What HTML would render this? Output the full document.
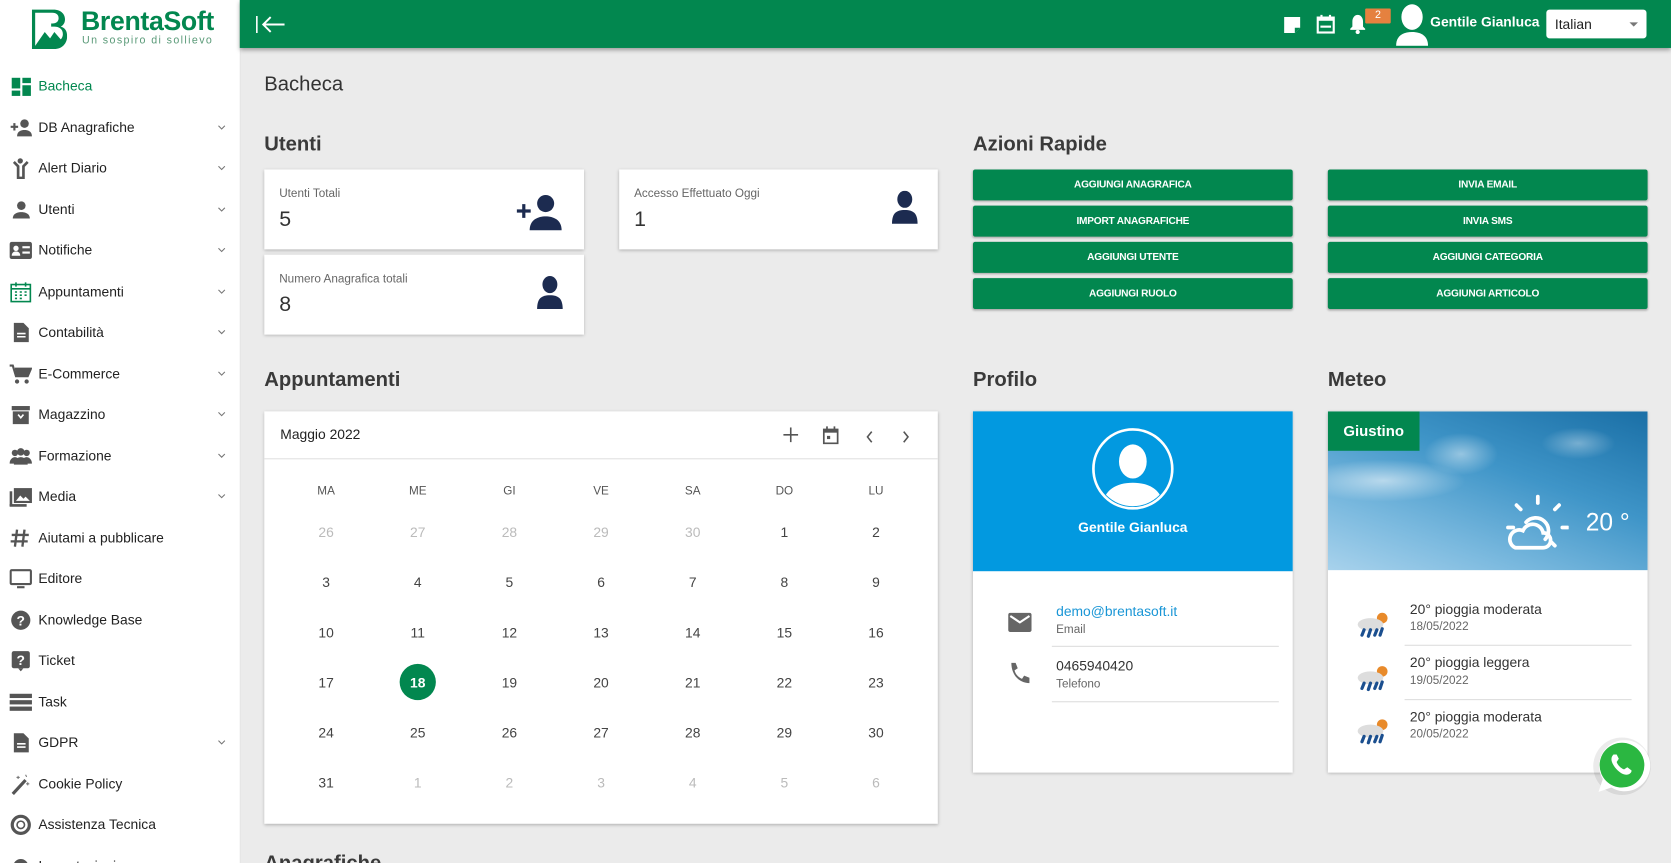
<!DOCTYPE html>
<html><head><meta charset="utf-8">
<style>
html,body{margin:0;padding:0;width:1671px;height:863px;overflow:hidden;background:#ebebeb}
#w{position:absolute;left:0;top:0;width:1568px;height:810px;overflow:hidden;transform:scale(1.0657);transform-origin:0 0;font-family:"Liberation Sans",Arial,sans-serif;color:#333;background:#ebebeb}
.a{position:absolute}
#side{left:0;top:0;width:225px;height:810px;background:#fff;border-right:1px solid #e2e2e2}
.nav{position:absolute;left:0;width:225px;height:30px;font-size:13px;color:#222}
.nav .ic{position:absolute;left:9px;top:5px;width:21px;height:20px}
.nav .t{position:absolute;left:36px;top:7px}
.nav .ch{position:absolute;left:203px;top:10px;width:10px;height:10px}
#hdr{left:225px;top:0;width:1343px;height:45px;background:#02874f;box-shadow:0 2px 4px rgba(0,0,0,.35)}
.h2{position:absolute;font-size:19px;font-weight:bold;color:#3a3a3a}
.card{position:absolute;background:#fff;box-shadow:0 1px 3px rgba(0,0,0,.25)}
.lbl{position:absolute;font-size:11px;color:#666}
.num{position:absolute;font-size:20px;color:#333}
.btn{position:absolute;width:300px;height:29px;background:#02874f;color:#fff;font-size:9.5px;font-weight:bold;text-align:center;line-height:29px;border-radius:2px;box-shadow:0 1px 2px rgba(0,0,0,.3);letter-spacing:-.2px}
.dh{position:absolute;font-size:11px;color:#555;width:40px;text-align:center;margin-left:-20px}
.d{position:absolute;font-size:13px;color:#444;width:40px;text-align:center;margin-left:-20px}
.g{color:#bbb}
</style></head><body><div id="w">

<div id="side" class="a">
 <svg class="a" style="left:29px;top:8px" width="34" height="40" viewBox="0 0 34 40"><path d="M1 1h20c8 0 11 5 11 9 0 4-2 6-4 7 4 1 6 4 6 9 0 7-5 12-12 12H1z" fill="#02874f"/><path d="M4 4v31l9-13 5 6 4-6 6 7c1-1 2-3 2-5 0-5-4-7-8-7h-3v-3h1c4 0 6-2 6-5s-2-5-6-5z" fill="#fff"/></svg>
 <div class="a" style="left:76px;top:6px;font-size:25px;font-weight:bold;color:#02874f;letter-spacing:-.3px">BrentaSoft</div>
 <div class="a" style="left:77px;top:33px;font-size:10px;color:#5a9a78;letter-spacing:1.3px">Un sospiro di sollievo</div>

 <div class="nav" style="top:66px;color:#02874f"><svg class="ic" viewBox="0 0 21 20"><rect x="2" y="2" width="8" height="10" fill="#02874f"/><rect x="12" y="2" width="8" height="5" fill="#02874f"/><rect x="12" y="9" width="8" height="10" fill="#02874f"/><rect x="2" y="14" width="8" height="5" fill="#02874f"/></svg><span class="t">Bacheca</span></div>
 <div class="nav" style="top:105px"><svg class="ic" viewBox="0 0 21 20"><circle cx="14" cy="6" r="4" fill="#555"/><path d="M7 18c0-5 4-6 7-6s7 1 7 6z" fill="#555"/><path d="M1 9h7M4.5 5.5v7" stroke="#555" stroke-width="2"/></svg><span class="t">DB Anagrafiche</span><svg class="ch" viewBox="0 0 10 10"><path d="M2 3l3 3 3-3" stroke="#777" fill="none"/></svg></div>
 <div class="nav" style="top:143px"><svg class="ic" viewBox="0 0 21 20"><circle cx="10" cy="3" r="2.5" fill="#555"/><path d="M4 4l4 4v11h5V8l4-4" stroke="#555" stroke-width="2.5" fill="none"/></svg><span class="t">Alert Diario</span><svg class="ch" viewBox="0 0 10 10"><path d="M2 3l3 3 3-3" stroke="#777" fill="none"/></svg></div>
 <div class="nav" style="top:182px"><svg class="ic" viewBox="0 0 21 20"><circle cx="11" cy="6" r="4" fill="#555"/><path d="M3 18c0-5 5-6 8-6s8 1 8 6z" fill="#555"/></svg><span class="t">Utenti</span><svg class="ch" viewBox="0 0 10 10"><path d="M2 3l3 3 3-3" stroke="#777" fill="none"/></svg></div>
 <div class="nav" style="top:220px"><svg class="ic" viewBox="0 0 21 20"><rect x="0" y="2" width="21" height="16" rx="2" fill="#555"/><circle cx="6" cy="8" r="2.5" fill="#fff"/><path d="M2 15c0-3 2-4 4-4s4 1 4 4z" fill="#fff"/><rect x="12" y="6" width="7" height="2" fill="#fff"/><rect x="12" y="11" width="7" height="2" fill="#fff"/></svg><span class="t">Notifiche</span><svg class="ch" viewBox="0 0 10 10"><path d="M2 3l3 3 3-3" stroke="#777" fill="none"/></svg></div>
 <div class="nav" style="top:259px"><svg class="ic" viewBox="0 0 21 20"><rect x="1.5" y="3" width="18" height="16" fill="none" stroke="#02874f" stroke-width="1.5"/><path d="M1.5 7h18M6 1v4M15 1v4M5 10h2M9.5 10h2M14 10h2M5 13h2M9.5 13h2M14 13h2M5 16h2M9.5 16h2" stroke="#02874f" stroke-width="1.5"/></svg><span class="t">Appuntamenti</span><svg class="ch" viewBox="0 0 10 10"><path d="M2 3l3 3 3-3" stroke="#777" fill="none"/></svg></div>
 <div class="nav" style="top:297px"><svg class="ic" viewBox="0 0 21 20"><path d="M4 1h9l5 5v13H4z" fill="#555"/><path d="M7 11h8M7 14h8" stroke="#fff" stroke-width="1.5"/></svg><span class="t">Contabilità</span><svg class="ch" viewBox="0 0 10 10"><path d="M2 3l3 3 3-3" stroke="#777" fill="none"/></svg></div>
 <div class="nav" style="top:336px"><svg class="ic" viewBox="0 0 21 20"><path d="M0 2h3l3 10h11l3-7H5" fill="none" stroke="#555" stroke-width="2"/><path d="M5 5h15l-3 7H6z" fill="#555"/><circle cx="7" cy="17" r="2" fill="#555"/><circle cx="16" cy="17" r="2" fill="#555"/></svg><span class="t">E-Commerce</span><svg class="ch" viewBox="0 0 10 10"><path d="M2 3l3 3 3-3" stroke="#777" fill="none"/></svg></div>
 <div class="nav" style="top:374px"><svg class="ic" viewBox="0 0 21 20"><rect x="2" y="2" width="17" height="4" fill="#555"/><path d="M3 7h15v12H3z" fill="#555"/><path d="M8 10l2.5 3 2.5-3" stroke="#fff" stroke-width="1.5" fill="none"/></svg><span class="t">Magazzino</span><svg class="ch" viewBox="0 0 10 10"><path d="M2 3l3 3 3-3" stroke="#777" fill="none"/></svg></div>
 <div class="nav" style="top:413px"><svg class="ic" viewBox="0 0 21 20"><circle cx="5" cy="7" r="3" fill="#555"/><circle cx="16" cy="7" r="3" fill="#555"/><circle cx="10.5" cy="6" r="3.5" fill="#555"/><path d="M0 17c0-4 3-6 5-6s5 2 5 6zM11 17c0-4 3-6 5-6s5 2 5 6zM4 18c0-5 4-7 6.5-7s6.5 2 6.5 7z" fill="#555"/></svg><span class="t">Formazione</span><svg class="ch" viewBox="0 0 10 10"><path d="M2 3l3 3 3-3" stroke="#777" fill="none"/></svg></div>
 <div class="nav" style="top:451px"><svg class="ic" viewBox="0 0 21 20"><rect x="4" y="2" width="17" height="14" fill="#555"/><rect x="0" y="5" width="2.5" height="14" fill="#555"/><rect x="0" y="17" width="16" height="2.5" fill="#555"/><path d="M6 14l4-5 3 3 2-2 4 4z" fill="#fff"/></svg><span class="t">Media</span><svg class="ch" viewBox="0 0 10 10"><path d="M2 3l3 3 3-3" stroke="#777" fill="none"/></svg></div>
 <div class="nav" style="top:490px"><svg class="ic" viewBox="0 0 21 20"><path d="M7 2L5 18M14 2l-2 16M2 7h16M1 13h16" stroke="#555" stroke-width="2.2"/></svg><span class="t">Aiutami a pubblicare</span></div>
 <div class="nav" style="top:528px"><svg class="ic" viewBox="0 0 21 20"><rect x="1" y="2" width="19" height="13" rx="1" fill="none" stroke="#555" stroke-width="2"/><rect x="7" y="17" width="7" height="2" fill="#555"/></svg><span class="t">Editore</span></div>
 <div class="nav" style="top:567px"><svg class="ic" viewBox="0 0 21 20"><circle cx="10.5" cy="10" r="9" fill="#555"/><text x="10.5" y="15" font-size="13" font-weight="bold" fill="#fff" text-anchor="middle" font-family="Liberation Sans">?</text></svg><span class="t">Knowledge Base</span></div>
 <div class="nav" style="top:605px"><svg class="ic" viewBox="0 0 21 20"><rect x="2" y="1" width="17" height="16" rx="2" fill="#555"/><path d="M8 17l2.5 3 2.5-3z" fill="#555"/><text x="10.5" y="14" font-size="13" font-weight="bold" fill="#fff" text-anchor="middle" font-family="Liberation Sans">?</text></svg><span class="t">Ticket</span></div>
 <div class="nav" style="top:644px"><svg class="ic" viewBox="0 0 21 20"><rect x="0" y="2" width="21" height="4" fill="#555"/><rect x="0" y="8" width="21" height="4" fill="#555"/><rect x="0" y="14" width="21" height="4" fill="#555"/></svg><span class="t">Task</span></div>
 <div class="nav" style="top:682px"><svg class="ic" viewBox="0 0 21 20"><path d="M4 1h9l5 5v13H4z" fill="#555"/><path d="M7 11h8M7 14h8" stroke="#fff" stroke-width="1.5"/></svg><span class="t">GDPR</span><svg class="ch" viewBox="0 0 10 10"><path d="M2 3l3 3 3-3" stroke="#777" fill="none"/></svg></div>
 <div class="nav" style="top:721px"><svg class="ic" viewBox="0 0 21 20"><path d="M3 19L15 6" stroke="#555" stroke-width="3"/><path d="M8 2v3M6.5 3.5h3M17 8v3M15.5 9.5h3M15 1l1 2" stroke="#777" stroke-width="1"/></svg><span class="t">Cookie Policy</span></div>
 <div class="nav" style="top:759px"><svg class="ic" viewBox="0 0 21 20"><circle cx="10.5" cy="10" r="8" fill="none" stroke="#555" stroke-width="3"/><circle cx="10.5" cy="10" r="3.5" fill="none" stroke="#555" stroke-width="1.5"/></svg><span class="t">Assistenza Tecnica</span></div>
 <div class="nav" style="top:798px"><svg class="ic" viewBox="0 0 21 20"><circle cx="10.5" cy="10" r="7" fill="#555"/><circle cx="10.5" cy="10" r="2.5" fill="#fff"/></svg><span class="t">Impostazioni</span></div>
</div>

<div id="hdr" class="a">
 <svg class="a" style="left:15px;top:14px" width="30" height="18" viewBox="0 0 30 18"><path d="M1 1v16" stroke="#fff" stroke-width="1.5"/><path d="M7 9h20M14 2L7 9l7 7" stroke="#fff" stroke-width="1.8" fill="none"/></svg>
 <svg class="a" style="left:979px;top:15px" width="17" height="17" viewBox="0 0 17 17"><path d="M1 1h15v10l-5 5H1z" fill="#fff"/><path d="M11 16v-5h5" fill="#02874f"/></svg>
 <svg class="a" style="left:1010px;top:13px" width="18" height="19" viewBox="0 0 18 19"><rect x="1.5" y="3.5" width="15" height="14" fill="none" stroke="#fff" stroke-width="2"/><rect x="1.5" y="3.5" width="15" height="3" fill="#fff"/><path d="M5 1v4M13 1v4" stroke="#fff" stroke-width="2"/><rect x="4" y="11" width="10" height="2" fill="#fff"/></svg>
 <svg class="a" style="left:1041px;top:13px" width="16" height="19" viewBox="0 0 16 19"><path d="M8 1c3 0 5 3 5 6v5l2 2v1H1v-1l2-2V7c0-3 2-6 5-6z" fill="#fff"/><circle cx="8" cy="17" r="2" fill="#fff"/></svg>
 <div class="a" style="left:1056px;top:8px;width:24px;height:14px;background:#e5813f;color:#fff;font-size:10px;text-align:center;line-height:14px;border-radius:1px">2</div>
 <svg class="a" style="left:1085px;top:3px" width="30" height="40" viewBox="0 0 30 40"><ellipse cx="15" cy="13" rx="10" ry="12" fill="#fff"/><path d="M0 40c0-9 6-13 15-13s15 4 15 13z" fill="#fff"/></svg>
 <div class="a" style="left:1117px;top:13px;font-size:13px;font-weight:bold;color:#fff">Gentile Gianluca</div>
 <div class="a" style="left:1226px;top:9px;width:94px;height:27px;background:#fff;border-radius:3px"><span class="a" style="left:8px;top:6px;font-size:13px;color:#222">Italian</span><svg class="a" style="left:77px;top:11px" width="10" height="6"><path d="M1 1h8L5 5z" fill="#777"/></svg></div>
</div>

<div class="a" style="left:248px;top:69px;font-size:19px;color:#333">Bacheca</div>

<div class="h2" style="left:248px;top:125px">Utenti</div>
<div class="card" style="left:248px;top:159px;width:300px;height:75px"><div class="lbl" style="left:14px;top:17px">Utenti Totali</div><div class="num" style="left:14px;top:36px">5</div>
 <svg class="a" style="left:236px;top:23px" width="44" height="36" viewBox="0 0 44 36"><circle cx="28" cy="9" r="8" fill="#1c2b50"/><path d="M13 34c0-10 8-13 15-13s15 3 15 13z" fill="#1c2b50"/><path d="M1 16h13M7.5 9.5v13" stroke="#1c2b50" stroke-width="3"/></svg></div>
<div class="card" style="left:581px;top:159px;width:299px;height:75px"><div class="lbl" style="left:14px;top:17px">Accesso Effettuato Oggi</div><div class="num" style="left:14px;top:36px">1</div>
 <svg class="a" style="left:255px;top:20px" width="26" height="32" viewBox="0 0 26 32"><ellipse cx="13" cy="8" rx="7" ry="8" fill="#1c2b50"/><path d="M1 31c0-10 4-13 12-13s12 3 12 13z" fill="#1c2b50"/></svg></div>
<div class="card" style="left:248px;top:239px;width:300px;height:75px"><div class="lbl" style="left:14px;top:17px">Numero Anagrafica totali</div><div class="num" style="left:14px;top:36px">8</div>
 <svg class="a" style="left:255px;top:20px" width="26" height="32" viewBox="0 0 26 32"><ellipse cx="13" cy="8" rx="7" ry="8" fill="#1c2b50"/><path d="M1 31c0-10 4-13 12-13s12 3 12 13z" fill="#1c2b50"/></svg></div>

<div class="h2" style="left:913px;top:125px">Azioni Rapide</div>
<div class="btn" style="left:913px;top:159px">AGGIUNGI ANAGRAFICA</div>
<div class="btn" style="left:913px;top:193px">IMPORT ANAGRAFICHE</div>
<div class="btn" style="left:913px;top:227px">AGGIUNGI UTENTE</div>
<div class="btn" style="left:913px;top:261px">AGGIUNGI RUOLO</div>
<div class="btn" style="left:1246px;top:159px">INVIA EMAIL</div>
<div class="btn" style="left:1246px;top:193px">INVIA SMS</div>
<div class="btn" style="left:1246px;top:227px">AGGIUNGI CATEGORIA</div>
<div class="btn" style="left:1246px;top:261px">AGGIUNGI ARTICOLO</div>

<div class="h2" style="left:248px;top:346px">Appuntamenti</div>
<div class="card" style="left:248px;top:386px;width:632px;height:387px">
 <div class="a" style="left:15px;top:14px;font-size:13px;color:#222">Maggio 2022</div>
 <svg class="a" style="left:487px;top:15px" width="14" height="14"><path d="M7 0v14M0 7h14" stroke="#555" stroke-width="1.5"/></svg>
 <svg class="a" style="left:524px;top:14px" width="15" height="17" viewBox="0 0 15 17"><rect x="1" y="3" width="13" height="13" fill="none" stroke="#555" stroke-width="1.6"/><rect x="1" y="3" width="13" height="3" fill="#555"/><path d="M4 0v3M11 0v3" stroke="#555" stroke-width="1.6"/><rect x="4" y="9" width="3" height="3" fill="#555"/></svg>
 <svg class="a" style="left:564px;top:18px" width="8" height="12"><path d="M6 1L2 6l4 5" stroke="#555" stroke-width="1.5" fill="none"/></svg>
 <svg class="a" style="left:598px;top:18px" width="8" height="12"><path d="M2 1l4 5-4 5" stroke="#555" stroke-width="1.5" fill="none"/></svg>
 <div class="a" style="left:0;top:44px;width:632px;height:1px;background:#e0e0e0"></div>
 <div class="dh" style="left:58px;top:69px">MA</div><div class="dh" style="left:144px;top:69px">ME</div><div class="dh" style="left:230px;top:69px">GI</div><div class="dh" style="left:316px;top:69px">VE</div><div class="dh" style="left:402px;top:69px">SA</div><div class="dh" style="left:488px;top:69px">DO</div><div class="dh" style="left:574px;top:69px">LU</div>

 <div class="d g" style="left:58px;top:106px">26</div><div class="d g" style="left:144px;top:106px">27</div><div class="d g" style="left:230px;top:106px">28</div><div class="d g" style="left:316px;top:106px">29</div><div class="d g" style="left:402px;top:106px">30</div><div class="d" style="left:488px;top:106px">1</div><div class="d" style="left:574px;top:106px">2</div>
 <div class="d" style="left:58px;top:153px">3</div><div class="d" style="left:144px;top:153px">4</div><div class="d" style="left:230px;top:153px">5</div><div class="d" style="left:316px;top:153px">6</div><div class="d" style="left:402px;top:153px">7</div><div class="d" style="left:488px;top:153px">8</div><div class="d" style="left:574px;top:153px">9</div>
 <div class="d" style="left:58px;top:200px">10</div><div class="d" style="left:144px;top:200px">11</div><div class="d" style="left:230px;top:200px">12</div><div class="d" style="left:316px;top:200px">13</div><div class="d" style="left:402px;top:200px">14</div><div class="d" style="left:488px;top:200px">15</div><div class="d" style="left:574px;top:200px">16</div>
 <div class="a" style="left:127px;top:237px;width:34px;height:34px;border-radius:50%;background:#02874f"></div>
 <div class="d" style="left:58px;top:247px">17</div><div class="d" style="left:144px;top:247px;color:#fff;font-weight:bold">18</div><div class="d" style="left:230px;top:247px">19</div><div class="d" style="left:316px;top:247px">20</div><div class="d" style="left:402px;top:247px">21</div><div class="d" style="left:488px;top:247px">22</div><div class="d" style="left:574px;top:247px">23</div>
 <div class="d" style="left:58px;top:294px">24</div><div class="d" style="left:144px;top:294px">25</div><div class="d" style="left:230px;top:294px">26</div><div class="d" style="left:316px;top:294px">27</div><div class="d" style="left:402px;top:294px">28</div><div class="d" style="left:488px;top:294px">29</div><div class="d" style="left:574px;top:294px">30</div>
 <div class="d" style="left:58px;top:341px">31</div><div class="d g" style="left:144px;top:341px">1</div><div class="d g" style="left:230px;top:341px">2</div><div class="d g" style="left:316px;top:341px">3</div><div class="d g" style="left:402px;top:341px">4</div><div class="d g" style="left:488px;top:341px">5</div><div class="d g" style="left:574px;top:341px">6</div>
</div>
<div class="h2" style="left:248px;top:800px">Anagrafiche</div>

<div class="h2" style="left:913px;top:346px">Profilo</div>
<div class="card" style="left:913px;top:386px;width:300px;height:339px">
 <div class="a" style="left:0;top:0;width:300px;height:150px;background:#0299e0"></div>
 <svg class="a" style="left:111px;top:15px" width="78" height="78" viewBox="0 0 78 78"><circle cx="39" cy="39" r="37" fill="#0299e0" stroke="#fff" stroke-width="2.5"/><clipPath id="cc"><circle cx="39" cy="39" r="35"/></clipPath><g clip-path="url(#cc)" fill="#fff"><ellipse cx="39" cy="32" rx="13" ry="16"/><path d="M10 78c0-18 12-26 29-26s29 8 29 26z"/></g></svg>
 <div class="a" style="left:0;top:101px;width:300px;text-align:center;font-size:13px;font-weight:bold;color:#fff">Gentile Gianluca</div>
 <svg class="a" style="left:33px;top:189px" width="22" height="18" viewBox="0 0 22 18"><rect x="0" y="0" width="22" height="18" rx="2" fill="#666"/><path d="M2 3l9 6 9-6" stroke="#fff" stroke-width="2" fill="none"/></svg>
 <div class="a" style="left:78px;top:180px;font-size:13px;color:#1a96d6">demo@brentasoft.it</div>
 <div class="a" style="left:78px;top:199px;font-size:11px;color:#666">Email</div>
 <div class="a" style="left:74px;top:220px;width:213px;height:1px;background:#ddd"></div>
 <svg class="a" style="left:34px;top:235px" width="19" height="22" viewBox="0 0 19 22"><path d="M2 1l4 0 2 5-3 2c1 4 4 7 7 8l2-3 5 2v5c-10 0-17-8-17-19z" fill="#666"/></svg>
 <div class="a" style="left:78px;top:231px;font-size:13px;color:#333">0465940420</div>
 <div class="a" style="left:78px;top:250px;font-size:11px;color:#666">Telefono</div>
 <div class="a" style="left:74px;top:272px;width:213px;height:1px;background:#ddd"></div>
</div>

<div class="h2" style="left:1246px;top:346px">Meteo</div>
<div class="card" style="left:1246px;top:386px;width:300px;height:339px;overflow:hidden">
 <div class="a" style="left:0;top:0;width:300px;height:149px;background:linear-gradient(200deg,#1a6fa6 0%,#3f95c8 40%,#7cbadf 75%,#a8d2ec 100%)"></div>
 <div class="a" style="left:0;top:45px;width:130px;height:40px;background:radial-gradient(ellipse at 40% 50%,rgba(255,255,255,.55),rgba(255,255,255,0) 70%)"></div>
 <div class="a" style="left:90px;top:20px;width:70px;height:40px;background:radial-gradient(ellipse at 50% 50%,rgba(255,255,255,.45),rgba(255,255,255,0) 70%)"></div>
 <div class="a" style="left:200px;top:15px;width:70px;height:30px;background:radial-gradient(ellipse at 50% 50%,rgba(255,255,255,.35),rgba(255,255,255,0) 70%)"></div>
 <div class="a" style="left:0;top:0;width:86px;height:37px;background:#02874f;color:#fff;font-size:14px;font-weight:bold;line-height:36px;text-align:center">Giustino</div>
 <svg class="a" style="left:166px;top:78px" width="60" height="54" viewBox="0 0 60 54"><g stroke="#fff" stroke-width="3.5" stroke-linecap="round" fill="none"><path d="M31 2v6M11 10l4 4M51 10l-4 4M3 31h5M54 31h5M47 48l-3-3"/><path d="M20 26a12 12 0 1 1 18 16"/><path d="M10 50h26a7 7 0 0 0 0-14 10 10 0 0 0-19-2 8 8 0 0 0-7 16z"/></g></svg>
 <div class="a" style="left:242px;top:91px;font-size:23px;color:#fff">20 °</div>
 <svg class="a" style="left:26px;top:186px" width="34" height="30" viewBox="0 0 34 30"><circle cx="25" cy="8" r="5" fill="#e88a2a"/><ellipse cx="14" cy="14" rx="12" ry="6" fill="#ddd"/><path d="M8 19l-2 5M14 19l-2 6M20 19l-2 5M25 18l-2 6" stroke="#1b4f8f" stroke-width="3" stroke-linecap="round"/></svg>
 <div class="a" style="left:77px;top:178px;font-size:13px;color:#333">20° pioggia moderata</div>
 <div class="a" style="left:77px;top:196px;font-size:11px;color:#666">18/05/2022</div>
 <div class="a" style="left:72px;top:219px;width:213px;height:1px;background:#ddd"></div>
 <svg class="a" style="left:26px;top:236px" width="34" height="30" viewBox="0 0 34 30"><circle cx="25" cy="8" r="5" fill="#e88a2a"/><ellipse cx="14" cy="14" rx="12" ry="6" fill="#ddd"/><path d="M8 19l-2 5M14 19l-2 6M20 19l-2 5M25 18l-2 6" stroke="#1b4f8f" stroke-width="3" stroke-linecap="round"/></svg>
 <div class="a" style="left:77px;top:228px;font-size:13px;color:#333">20° pioggia leggera</div>
 <div class="a" style="left:77px;top:247px;font-size:11px;color:#666">19/05/2022</div>
 <div class="a" style="left:72px;top:270px;width:213px;height:1px;background:#ddd"></div>
 <svg class="a" style="left:26px;top:286px" width="34" height="30" viewBox="0 0 34 30"><circle cx="25" cy="8" r="5" fill="#e88a2a"/><ellipse cx="14" cy="14" rx="12" ry="6" fill="#ddd"/><path d="M8 19l-2 5M14 19l-2 6M20 19l-2 5M25 18l-2 6" stroke="#1b4f8f" stroke-width="3" stroke-linecap="round"/></svg>
 <div class="a" style="left:77px;top:279px;font-size:13px;color:#333">20° pioggia moderata</div>
 <div class="a" style="left:77px;top:297px;font-size:11px;color:#666">20/05/2022</div>
</div>

<svg class="a" style="left:1492px;top:690px" width="60" height="60" viewBox="0 0 60 60"><circle cx="30" cy="29" r="27" fill="rgba(0,0,0,.08)"/><path d="M8 53l4-12a24 24 0 1 1 8 8z" fill="#fff"/><circle cx="30" cy="28" r="21" fill="#2bb741"/><path d="M22 18c-2 2-3 5 0 10s8 9 12 9c3 0 5-2 5-4l-4-3-3 2c-3-1-6-4-7-7l2-3-2-4z" fill="#fff"/></svg>

</div></body></html>
